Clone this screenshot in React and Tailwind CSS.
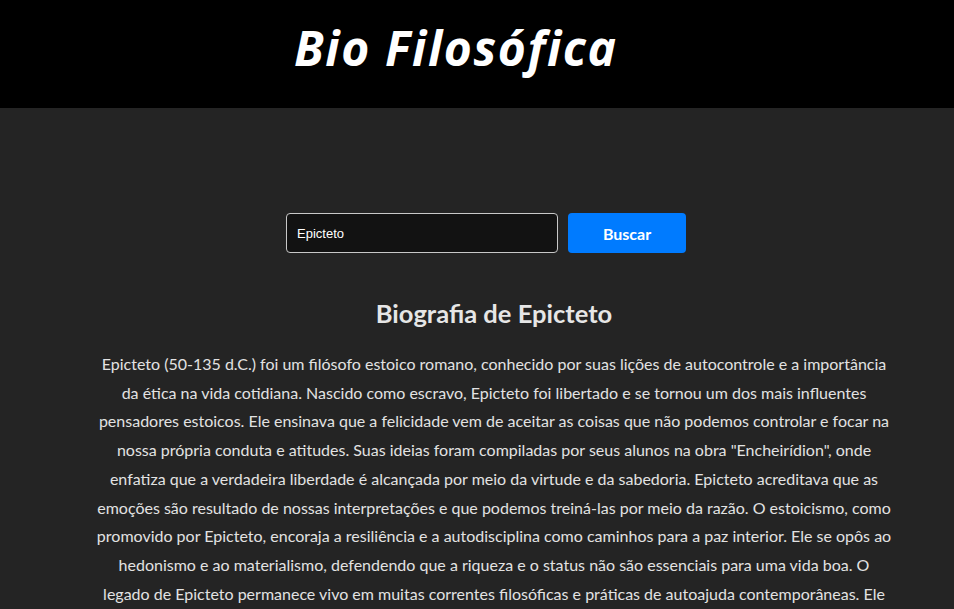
import React, { useState } from 'react';

const lines = [
  'Epicteto (50-135 d.C.) foi um filósofo estoico romano, conhecido por suas lições de autocontrole e a importância',
  'da ética na vida cotidiana. Nascido como escravo, Epicteto foi libertado e se tornou um dos mais influentes',
  'pensadores estoicos. Ele ensinava que a felicidade vem de aceitar as coisas que não podemos controlar e focar na',
  'nossa própria conduta e atitudes. Suas ideias foram compiladas por seus alunos na obra "Encheirídion", onde',
  'enfatiza que a verdadeira liberdade é alcançada por meio da virtude e da sabedoria. Epicteto acreditava que as',
  'emoções são resultado de nossas interpretações e que podemos treiná-las por meio da razão. O estoicismo, como',
  'promovido por Epicteto, encoraja a resiliência e a autodisciplina como caminhos para a paz interior. Ele se opôs ao',
  'hedonismo e ao materialismo, defendendo que a riqueza e o status não são essenciais para uma vida boa. O',
  'legado de Epicteto permanece vivo em muitas correntes filosóficas e práticas de autoajuda contemporâneas. Ele',
  'é lembrado como um dos grandes mestres da sabedoria prática.',
];

export default function App() {
  const [busca, setBusca] = useState('Epicteto');

  return (
    <div className="min-h-screen bg-[#242424] font-['Lato','Noto_Sans',sans-serif]">
      <header className="h-[108px] bg-black pl-[294px] pt-[14px]">
        <h1 className="text-[48px] font-bold italic leading-[68px] text-white font-['Open_Sans','Noto_Sans',sans-serif] tracking-[1.6px]">
          Bio Filosófica
        </h1>
      </header>

      <main className="flex flex-col items-center pl-[34px] pt-[105px] pb-10">
        <form
          className="flex gap-[10px] ml-[-16px]"
          onSubmit={(e) => e.preventDefault()}
        >
          <input
            value={busca}
            onChange={(e) => setBusca(e.target.value)}
            className="h-10 w-[272px] rounded-[4px] border border-[#c8c8c8] bg-[#121212] px-[10px] text-[13px] text-white outline-none font-['Liberation_Sans',Arial,sans-serif]"
          />
          <button
            type="submit"
            className="h-10 w-[118px] rounded-[4px] bg-[#007bff] pt-[2px] text-[16px] font-bold text-white"
          >
            Buscar
          </button>
        </form>

        <h2 className="mt-[44px] text-[25.5px] font-bold leading-[32px] text-[#e6e6e6]">
          Biografia de Epicteto
        </h2>

        <p className="mt-[21px] text-center text-[16px] leading-[28.7px] text-[#e2e2e2]">
          {lines.map((l, i) => (
            <React.Fragment key={i}>
              {l}
              {i < lines.length - 1 && <br />}
            </React.Fragment>
          ))}
        </p>
      </main>
    </div>
  );
}
